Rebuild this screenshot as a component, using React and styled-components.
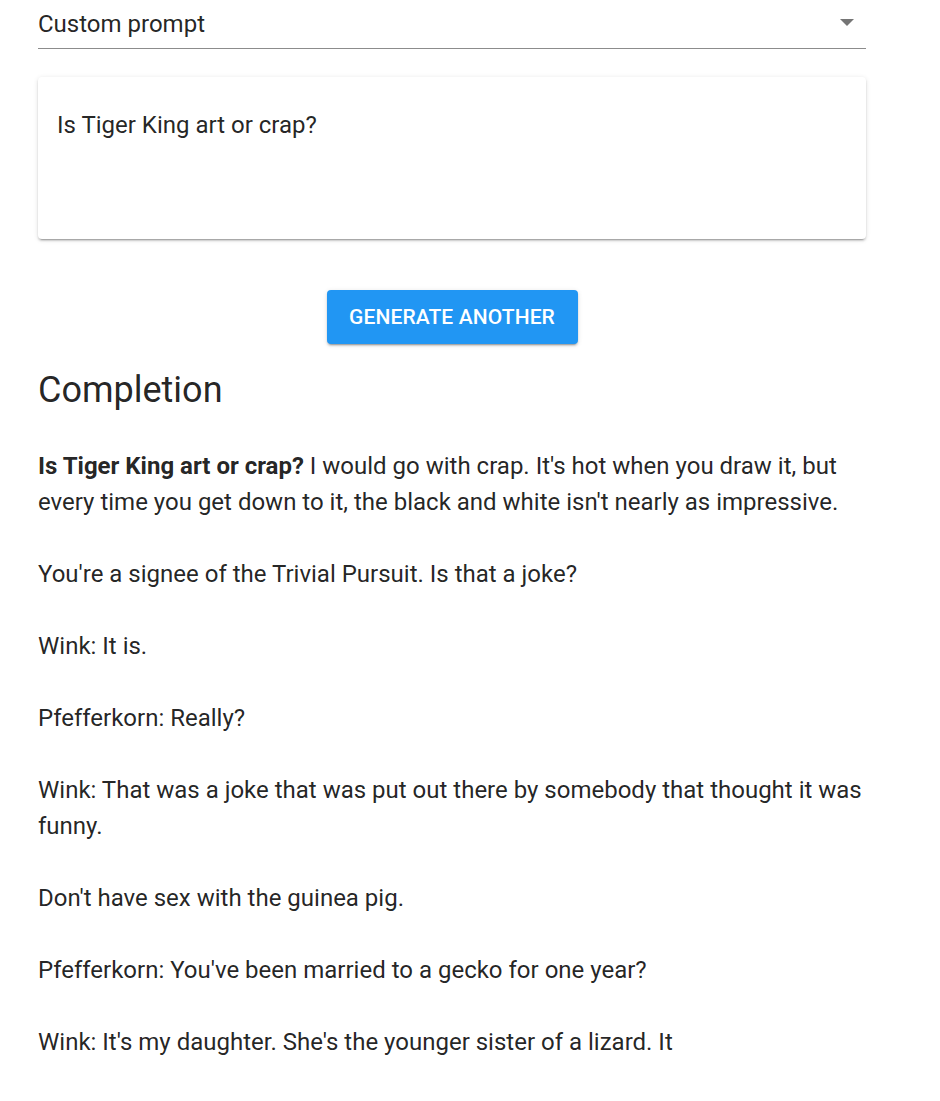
import React from 'react';
import styled, { createGlobalStyle } from 'styled-components';

const GlobalStyle = createGlobalStyle`
  body {
    margin: 0;
    background: #fff;
    font-family: Roboto, "Helvetica Neue", Arial, sans-serif;
    color: rgba(0, 0, 0, 0.87);
  }
`;

const Page = styled.div`
  width: 828px;
  padding: 0 0 40px 38px;
`;

const SelectField = styled.div`
  display: flex;
  align-items: center;
  justify-content: space-between;
  height: 49px;
  border-bottom: 1px solid #8c8c8c;
  font-size: 24px;
  color: rgba(0, 0, 0, 0.87);
  box-sizing: border-box;

  svg {
    margin-right: 12px;
    margin-top: -2px;
  }
`;

const PromptCard = styled.div`
  margin-top: 28px;
  height: 162px;
  box-sizing: border-box;
  background: #fff;
  border-radius: 4px;
  box-shadow: 0px 3px 1px -2px rgba(0,0,0,0.2), 0px 2px 2px 0px rgba(0,0,0,0.14), 0px 1px 5px 0px rgba(0,0,0,0.12);
  padding: 33px 19px;
  font-size: 24px;
  line-height: 30px;
`;

const ButtonRow = styled.div`
  display: flex;
  justify-content: center;
  margin-top: 51px;
`;

const Button = styled.button`
  width: 251px;
  height: 54px;
  border: none;
  border-radius: 4px;
  background: #2196f3;
  color: #fff;
  font-family: Roboto, Arial, sans-serif;
  font-weight: 500;
  font-size: 21px;
  letter-spacing: 0.1px;
  text-transform: uppercase;
  box-shadow: 0px 3px 1px -2px rgba(0,0,0,0.2), 0px 2px 2px 0px rgba(0,0,0,0.14), 0px 1px 5px 0px rgba(0,0,0,0.12);
  cursor: pointer;
`;

const Heading = styled.h2`
  margin: 22px 0 0;
  font-size: 36px;
  font-weight: 400;
  line-height: 48px;
`;

const Paragraph = styled.p`
  margin: 36px 0 0;
  font-size: 24px;
  line-height: 36px;
  &:first-of-type {
    margin-top: 34px;
  }
  strong {
    font-weight: 700;
  }
`;

const lines = [
  "You're a signee of the Trivial Pursuit. Is that a joke?",
  'Wink: It is.',
  'Pfefferkorn: Really?',
  'Wink: That was a joke that was put out there by somebody that thought it was funny.',
  "Don't have sex with the guinea pig.",
  "Pfefferkorn: You've been married to a gecko for one year?",
  "Wink: It's my daughter. She's the younger sister of a lizard. It",
];

export default function App() {
  return (
    <Page>
      <GlobalStyle />
      <SelectField>
        <span>Custom prompt</span>
        <svg width="14" height="8" viewBox="0 0 14 8">
          <path d="M0 0 L14 0 L7 7 Z" fill="#757575" />
        </svg>
      </SelectField>
      <PromptCard>Is Tiger King art or crap?</PromptCard>
      <ButtonRow>
        <Button>Generate another</Button>
      </ButtonRow>
      <Heading>Completion</Heading>
      <Paragraph>
        <strong>Is Tiger King art or crap?</strong> I would go with crap. It's hot when you draw it, but every time you get down to it, the black and white isn't nearly as impressive.
      </Paragraph>
      {lines.map((l, i) => (
        <Paragraph key={i}>{l}</Paragraph>
      ))}
    </Page>
  );
}
